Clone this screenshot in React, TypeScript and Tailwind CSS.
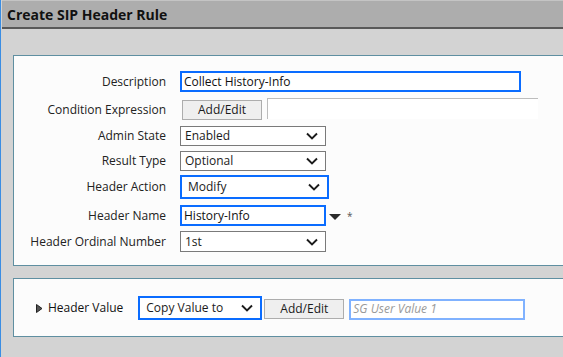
import type { ReactNode } from "react";

const font = { fontFamily: '"Open Sans", "Liberation Sans", sans-serif' };

function Chevron() {
  return (
    <svg width="12" height="8" viewBox="0 0 12 8" className="shrink-0">
      <polyline points="1,1.5 6,6.5 11,1.5" fill="none" stroke="#1b1b1b" strokeWidth="1.9" />
    </svg>
  );
}

function Select({ value, focused, width, height }: { value: string; focused?: boolean; width: string; height: string }) {
  return (
    <div
      className={`flex items-center justify-between bg-white pr-[7px] text-[12px] text-[#1b1b1b] ${width} ${height} ${
        focused ? "border-2 border-[#0a6cff] pl-[6px]" : "border border-[#7a7a7a] pl-[4px]"
      }`}
    >
      <span>{value}</span>
      <Chevron />
    </div>
  );
}

function Button({ children }: { children: ReactNode }) {
  return (
    <div className="flex h-[20px] w-[80px] items-center justify-center border border-[#adadad] bg-[#efefef] text-[12px] text-[#1b1b1b]">
      {children}
    </div>
  );
}

function Row({ label, children, className }: { label: string; children: ReactNode; className: string }) {
  return (
    <div className={`flex items-center ${className}`}>
      <div className="w-[153px] pr-[1px] text-right text-[12px] text-[#222]">{label}</div>
      <div className="ml-[13px] flex items-center">{children}</div>
    </div>
  );
}

export default function App() {
  return (
    <div
      style={font}
      className="flex h-[357px] w-[563px] flex-col overflow-hidden border-l border-[#3a8de3] bg-[#d3d3d3]"
    >
      <div className="ml-[1px] flex h-[29px] shrink-0 items-center border-t border-b-2 border-t-[#c4c4c4] border-b-[#595959] bg-[#adadad] pl-[5px]">
        <span className="text-[14px] font-bold text-[#111]">Create SIP Header Rule</span>
      </div>

      <div className="flex flex-col pl-[12px] pt-[26px]">
        <div className="flex h-[211px] flex-col border border-r-0 border-[#5f8fa1] bg-[#fcfcfc] pt-[15px]">
          <Row label="Description" className="mb-[7px]">
            <div className="flex h-[21px] w-[341px] items-center border-2 border-[#0a6cff] bg-white pl-[2px] text-[12px] text-[#111]">
              Collect History-Info
            </div>
          </Row>
          <Row label="Condition Expression" className="mb-[6px]">
            <div className="ml-[2px]">
              <Button>Add/Edit</Button>
            </div>
            <div className="ml-[5px] h-[21px] w-[271px] -translate-y-[1px] border-l border-t border-[#bdbdbd] bg-white" />
          </Row>
          <Row label="Admin State" className="mb-[5px]">
            <Select value="Enabled" width="w-[146px]" height="h-[20px]" />
          </Row>
          <Row label="Result Type" className="mb-[4px]">
            <Select value="Optional" width="w-[146px]" height="h-[20px]" />
          </Row>
          <Row label="Header Action" className="mb-[6px]">
            <Select value="Modify" focused width="w-[149px]" height="h-[24px]" />
          </Row>
          <Row label="Header Name" className="mb-[5px]">
            <div className="flex h-[21px] w-[146px] items-center border-2 border-[#0a6cff] bg-white pl-[2px] text-[12px] text-[#111]">
              History-Info
            </div>
            <svg width="12" height="7" viewBox="0 0 12 7" className="ml-[3px] mt-[3px]">
              <polygon points="0,0 12,0 6,6" fill="#2a2a2a" />
            </svg>
            <span className="ml-[6px] mt-[2px] text-[10px] text-[#555]">*</span>
          </Row>
          <Row label="Header Ordinal Number" className="">
            <Select value="1st" width="w-[146px]" height="h-[21px]" />
          </Row>
        </div>

        <div className="mt-[12px] flex h-[59px] items-center border border-r-0 border-[#5f8fa1] bg-[#fcfcfc] pl-[22px]">
          <svg width="7" height="9" viewBox="0 0 7 9" className="mt-[1px]">
            <polygon points="0.5,0.5 6,4.5 0.5,8.5" fill="#555" stroke="#222" strokeWidth="1" />
          </svg>
          <span className="ml-[5px] text-[12px] text-[#111]">Header Value</span>
          <div className="ml-[15px]">
            <Select value="Copy Value to" focused width="w-[124px]" height="h-[24px]" />
          </div>
          <div className="ml-[2px] mt-[3px]">
            <Button>Add/Edit</Button>
          </div>
          <div className="ml-[5px] mt-[3px] flex h-[21px] w-[176px] items-center border-2 border-[#80b2ff] bg-white pl-[2px] text-[12px] italic text-[#9a9a9a]">
            SG User Value 1
          </div>
        </div>
      </div>
    </div>
  );
}
